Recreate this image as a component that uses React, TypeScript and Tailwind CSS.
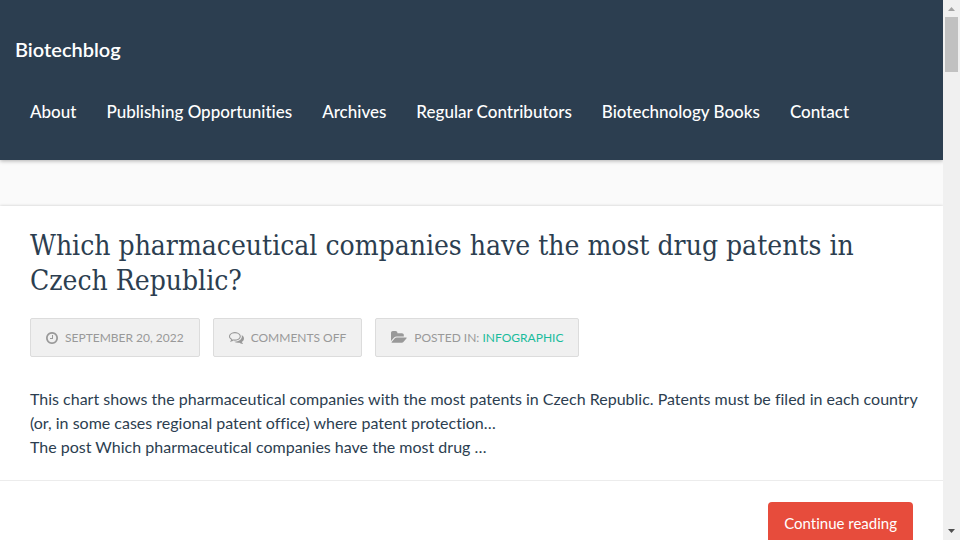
import type { ReactNode } from 'react';

const links = [
  'About',
  'Publishing Opportunities',
  'Archives',
  'Regular Contributors',
  'Biotechnology Books',
  'Contact',
];

function ClockIcon() {
  return (
    <svg viewBox="128 128 1536 1536" className="h-3 w-3" fill="currentColor" aria-hidden="true">
      <path d="M1024 544v448q0 14-9 23t-23 9h-320q-14 0-23-9t-9-23v-64q0-14 9-23t23-9h224v-352q0-14 9-23t23-9h64q14 0 23 9t9 23zm416 352q0-148-73-273t-198-198-273-73-273 73-198 198-73 273 73 273 198 198 273 73 273-73 198-198 73-273zm224 0q0 209-103 385.5t-279.5 279.5-385.5 103-385.5-103-279.5-279.5-103-385.5 103-385.5 279.5-279.5 385.5-103 385.5 103 279.5 279.5 103 385.5z" />
    </svg>
  );
}

function CommentsIcon() {
  return (
    <svg viewBox="0 128 1792 1664" className="h-3.5 w-[15px]" fill="currentColor" aria-hidden="true">
      <path d="M704 384q-153 0-286 52t-211.500 141-78.500 191q0 82 53 158t149 132l97 56-35 84q34-20 62-39l44-31 53 10q78 14 153 14 153 0 286-52t211.500-141 78.500-191-78.500-191-211.500-141-286-52zm0-128q191 0 353.500 68.500t256.500 186.500 94 257-94 257-256.500 186.500-353.500 68.500q-86 0-176-16-124 88-278 128-36 9-86 16h-3q-11 0-20.500-8t-11.500-21q-1-3-1-6.500t.5-6.500 2-6l2.500-5 3.500-5.500 4-5 4.500-5 4-4.500q5-6 23-25t26-29.500 22.500-29 25-38.500 20.500-44q-124-72-195-177t-71-224q0-139 94-257t256.500-186.500 353.500-68.500zm822 1169q10 24 20.500 44t25 38.500 22.500 29 26 29.500 23 25q1 1 4 4.500t4.500 5 4 5 3.500 5.500l2.500 5 2 6 .5 6.500-1 6.500q-3 14-13 22t-22 7q-50-7-86-16-154-40-278-128-90 16-176 16-271 0-472-132 58 4 88 4 161 0 309-45t264-129q125-92 192-212t67-254q0-77-23-152 129 71 204 178t75 230q0 120-71 224.500t-195 176.500z" />
    </svg>
  );
}

function FolderIcon() {
  return (
    <svg viewBox="64 128 1920 1664" className="h-3.5 w-4" fill="currentColor" aria-hidden="true">
      <path d="M1943 952q0 31-31 66l-336 396q-43 51-120.500 86.500t-143.500 35.500h-1088q-34 0-60.500-13t-26.500-43q0-31 31-66l336-396q43-51 120.500-86.500t143.500-35.500h1088q34 0 60.500 13t26.500 43zm-343-344v160h-832q-94 0-197 47.500t-164 119.500l-337 396-5 6q0-4-.5-12.500t-.5-12.500v-960q0-92 66-158t158-66h320q92 0 158 66t66 158v32h544q92 0 158 66t66 158z" />
    </svg>
  );
}

function Meta({ icon, children }: { icon: ReactNode; children: ReactNode }) {
  return (
    <li className="flex items-center gap-[7px] rounded-[2px] border border-[#dcdcdc] bg-[#f0f0f0] px-[15px] py-2.5 text-xs leading-[17px] text-[#999] uppercase">
      {icon}
      <span>{children}</span>
    </li>
  );
}

function ScrollTrack() {
  return (
    <div className="flex w-[17px] shrink-0 flex-col items-center justify-between bg-[#f0f0f0]" aria-hidden="true">
      <div className="flex flex-col items-center">
        <svg viewBox="0 0 17 17" className="h-[17px] w-[17px]">
          <path d="M5 11h7L8.500 7z" fill="#a3a3a3" />
        </svg>
        <div className="h-[55px] w-[13px] bg-[#c1c1c1]" />
      </div>
      <svg viewBox="0 0 17 17" className="h-[17px] w-[17px]">
        <path d="M5 6h7L8.500 10z" fill="#505050" />
      </svg>
    </div>
  );
}

export default function App() {
  return (
    <div className="flex h-screen bg-white font-['Lato',sans-serif] text-base text-[#2c3e50] [font-variant-ligatures:none]">
      <div className="min-w-0 flex-1 overflow-hidden bg-[#fafafa]">
        <header className="bg-[#2c3e50] px-[15px] pt-[37px] pb-9 text-white shadow-[0_1px_4px_rgba(0,0,0,0.3)]">
          <a href="#home" className="block text-xl leading-6 font-semibold">
            Biotechblog
          </a>
          <nav className="mt-[38px]">
            <ul className="flex flex-wrap gap-x-[30px] px-[15px] text-[17px] leading-[25px] font-medium">
              {links.map((label) => (
                <li key={label}>
                  <a href="#menu">{label}</a>
                </li>
              ))}
            </ul>
          </nav>
        </header>
        <main className="mt-[46px]">
          <article className="bg-white pt-[22px] shadow-[0_0_3px_rgba(0,0,0,0.2)]">
            <div className="pr-4 pl-[30px]">
              <h1 className="font-['DejaVu_Serif_Condensed','DejaVu_Serif',serif] text-[28px] leading-[35px]">
                Which pharmaceutical companies have the most drug patents in Czech Republic?
              </h1>
              <ul className="mt-5 flex flex-wrap gap-[13px]">
                <Meta icon={<ClockIcon />}>September 20, 2022</Meta>
                <Meta icon={<CommentsIcon />}>Comments Off</Meta>
                <Meta icon={<FolderIcon />}>
                  Posted in:{' '}
                  <a href="#infographic" className="text-[#1abc9c]">
                    Infographic
                  </a>
                </Meta>
              </ul>
              <p className="mt-[30px] leading-6">
                This chart shows the pharmaceutical companies with the most patents in Czech Republic. Patents must be
                filed in each country (or, in some cases regional patent office) where patent protection…
                <br />
                The post Which pharmaceutical companies have the most drug …
              </p>
            </div>
            <footer className="mt-[21px] flex justify-end border-t border-[#ececec] px-[30px] pt-[21px] pb-5">
              <a href="#continue" className="rounded bg-[#e74c3c] px-4 py-[9px] text-[15px] leading-6 text-white">
                Continue reading
              </a>
            </footer>
          </article>
        </main>
      </div>
      <ScrollTrack />
    </div>
  );
}
